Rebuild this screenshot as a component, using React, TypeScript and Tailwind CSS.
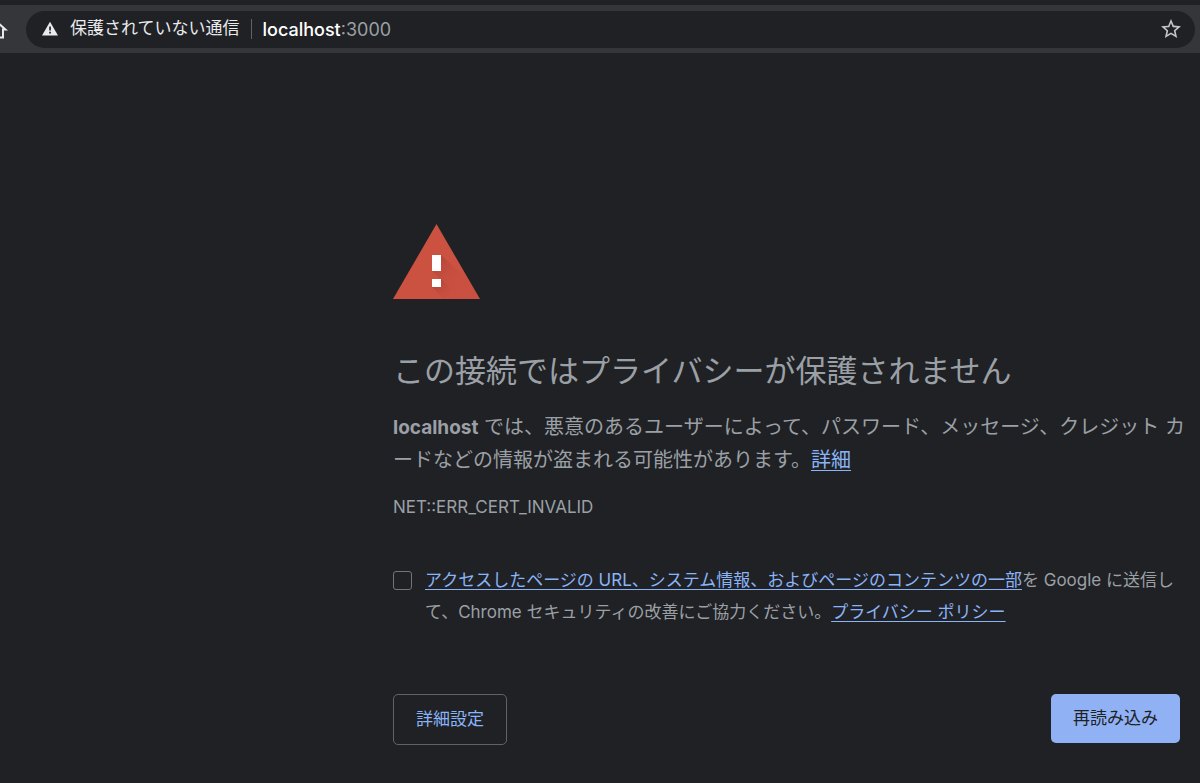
import React from "react";

function HomeIcon() {
  return (
    <svg className="-ml-4 h-6 w-6 shrink-0" viewBox="0 0 24 24" fill="none" stroke="#e8eaed" strokeWidth="2" aria-hidden="true">
      <path d="M1.500 12.500 11.500 3.500l10 9H19v8h-5.500v-6h-4v6H4v-8z" />
    </svg>
  );
}

function InsecureIcon() {
  return (
    <svg className="h-4 w-4 shrink-0" viewBox="0 0 16 16" aria-hidden="true">
      <path d="M8 .7 16 14.500H0z" fill="#e8eaed" />
      <path d="M7.200 5.500h1.700v4H7.200zM7.200 10.800h1.700v1.700H7.200z" fill="#202124" />
    </svg>
  );
}

function StarIcon() {
  return (
    <svg className="h-6 w-6" viewBox="0 0 24 24" fill="#c4c6c9" aria-hidden="true">
      <path d="M22 9.240l-7.190-.62L12 2 9.190 8.630 2 9.240l5.460 4.730L5.820 21 12 17.270 18.180 21l-1.630-7.030L22 9.240zM12 15.400l-3.760 2.270 1-4.280-3.320-2.880 4.380-.38L12 6.100l1.710 4.040 4.380.38-3.320 2.880 1 4.280L12 15.400z" />
    </svg>
  );
}

function WarningTriangle() {
  return (
    <svg className="h-[75px] w-[87px]" viewBox="0 0 87 75" role="img" aria-label="警告">
      <defs>
        <linearGradient id="shade" x1="42" y1="36" x2="62" y2="56" gradientUnits="userSpaceOnUse">
          <stop offset="0" stopColor="#a33f32" stopOpacity="0.6" />
          <stop offset="1" stopColor="#b8463a" stopOpacity="0.08" />
        </linearGradient>
        <linearGradient id="shadeLow" x1="42" y1="60" x2="54" y2="73" gradientUnits="userSpaceOnUse">
          <stop offset="0" stopColor="#a33f32" stopOpacity="0.6" />
          <stop offset="1" stopColor="#b8463a" stopOpacity="0.08" />
        </linearGradient>
      </defs>
      <path d="M43.500 0 87 75H0z" fill="#cb5141" />
      <path d="M48 31 76 57 87 75H67L39 47z" fill="url(#shade)" />
      <path d="M48 55 68 75H51L39 63z" fill="url(#shadeLow)" />
      <path d="M39 31h9v16h-9zM39 55h9v8h-9z" fill="#fff" />
    </svg>
  );
}

const linkClass = "text-[#8ab4f8] underline decoration-1 underline-offset-3";

export default function App() {
  return (
    <div
      lang="ja"
      className="min-h-screen bg-[#202124] font-['Inter','Noto_Sans_CJK_JP',sans-serif] text-[#9aa0a6]"
    >
      <header className="pt-[5px]">
        <div className="flex h-12 items-center gap-[18px] overflow-hidden bg-[#35363a] pr-[5px]">
          <HomeIcon />
          <div className="flex h-[37px] min-w-0 flex-1 items-center rounded-full bg-[#202124] pr-3 pl-4">
            <InsecureIcon />
            <span className="ml-3 text-[17px] whitespace-nowrap text-[#e8eaed]">保護されていない通信</span>
            <span className="mx-[11px] h-5 w-px bg-[#5f6368]" />
            <a href="#address" className="flex-1 text-[18px] text-[#9aa0a6]">
              <span className="font-medium text-white">localhost</span>:3000
            </a>
            <button type="button" aria-label="ブックマークに追加">
              <StarIcon />
            </button>
          </div>
        </div>
      </header>

      <main className="mr-5 ml-[393px] pt-[171px] pb-9">
        <WarningTriangle />
        <h1 className="mt-12 text-[31px] leading-[48px] whitespace-nowrap">
          この接続ではプライバシーが保護されません
        </h1>
        <p className="mt-4 text-[20px] leading-8 whitespace-nowrap">
          <strong className="text-[19px] font-bold">localhost</strong> では、悪意のあるユーザーによって、パスワード、メッセージ、クレジット カ
          <br />
          ードなどの情報が盗まれる可能性があります。
          <a href="#details" className={linkClass}>詳細</a>
        </p>
        <p className="mt-[19px] text-[17px] leading-6">NET::ERR_CERT_INVALID</p>

        <div className="mt-[45px] flex gap-[13px]">
          <input
            id="report"
            type="checkbox"
            className="mt-[7px] h-[19px] w-[19px] shrink-0 appearance-none rounded-[3px] border border-[#70757a] checked:bg-[#8ab4f8]"
          />
          <label htmlFor="report" className="text-[17px] leading-8 whitespace-nowrap">
            <a href="#report-contents" className={linkClass}>
              アクセスしたページの URL、システム情報、およびページのコンテンツの一部
            </a>
            を Google に送信し
            <br />
            て、Chrome セキュリティの改善にご協力ください。
            <a href="#privacy" className={linkClass}>プライバシー ポリシー</a>
          </label>
        </div>

        <div className="mt-[66px] flex items-start justify-between">
          <button
            type="button"
            className="h-[51px] rounded-[5px] border border-[#5f6368] px-[22px] text-[17px] text-[#8ab4f8]"
          >
            詳細設定
          </button>
          <button type="button" className="h-[49px] rounded-[5px] bg-[#90b2f5] px-[22px] text-[17px] text-[#202124]">
            再読み込み
          </button>
        </div>
      </main>
    </div>
  );
}
